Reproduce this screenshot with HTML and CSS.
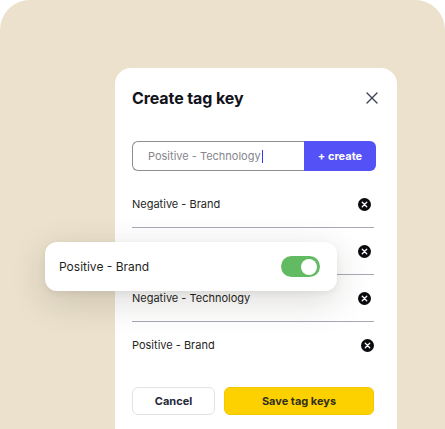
FILE: index.html
```html
<!DOCTYPE html>
<html lang="en">
<head>
    <meta charset="UTF-8">
    <meta name="viewport" content="width=device-width, initial-scale=1.0">
    <title>Create tag key</title>
    <link rel="stylesheet" href="styles.css">
</head>
<body>
    <div class="stage">
        <div class="modal">
            <div class="modal-head">
                <h1>Create tag key</h1>
                <button class="close-btn" aria-label="Close">
                    <svg width="12" height="12" viewBox="0 0 12 12"><path d="M1 1L11 11M11 1L1 11" stroke="#3d4357" stroke-width="1.4" stroke-linecap="round"/></svg>
                </button>
            </div>
            <div class="create-row">
                <div class="tag-input">Positive - Technology<span class="caret"></span></div>
                <button class="create-btn">+ create</button>
            </div>
            <ul class="tag-list">
                <li><span>Negative - Brand</span><svg class="remove" width="13" height="13" viewBox="0 0 14 14"><circle cx="7" cy="7" r="7" fill="#0b0b0f"/><path d="M4.6 4.6L9.4 9.4M9.4 4.6L4.6 9.4" stroke="#fff" stroke-width="1.4" stroke-linecap="round"/></svg></li>
                <li><span>Positive - Brand</span><svg class="remove" width="13" height="13" viewBox="0 0 14 14"><circle cx="7" cy="7" r="7" fill="#0b0b0f"/><path d="M4.6 4.6L9.4 9.4M9.4 4.6L4.6 9.4" stroke="#fff" stroke-width="1.4" stroke-linecap="round"/></svg></li>
                <li><span>Negative - Technology</span><svg class="remove" width="13" height="13" viewBox="0 0 14 14"><circle cx="7" cy="7" r="7" fill="#0b0b0f"/><path d="M4.6 4.6L9.4 9.4M9.4 4.6L4.6 9.4" stroke="#fff" stroke-width="1.4" stroke-linecap="round"/></svg></li>
                <li><span>Positive - Brand</span><svg class="remove shifted" width="13" height="13" viewBox="0 0 14 14"><circle cx="7" cy="7" r="7" fill="#0b0b0f"/><path d="M4.6 4.6L9.4 9.4M9.4 4.6L4.6 9.4" stroke="#fff" stroke-width="1.4" stroke-linecap="round"/></svg></li>
            </ul>
            <div class="modal-foot">
                <button class="btn-cancel">Cancel</button>
                <button class="btn-save">Save tag keys</button>
            </div>
        </div>
        <div class="floating-card">
            <span>Positive - Brand</span>
            <div class="toggle"><div class="knob"></div></div>
        </div>
    </div>
</body>
</html>
```

FILE: styles.css
```css
body {
    margin: 0;
    padding: 0;
    background-color: #ffffff;
    font-family: 'Inter', 'Liberation Sans', sans-serif;
    color: #1c1c22;
}
.stage {
    position: relative;
    width: 445px;
    height: 429px;
    background-color: #ebe1cc;
    border-radius: 30px 30px 0 0;
    overflow: hidden;
    box-sizing: border-box;
    padding: 68px 0 0 115px;
}
.modal {
    width: 282px;
    height: 361px;
    background-color: #ffffff;
    border-radius: 16px 16px 0 0;
    box-sizing: border-box;
    padding: 19px 23px 0 17px;
}
.modal-head {
    display: flex;
    align-items: center;
    justify-content: space-between;
    height: 22px;
}
.modal-head h1 {
    margin: 0;
    font-size: 16px;
    font-weight: 700;
    color: #12121a;
    letter-spacing: -0.1px;
}
.close-btn {
    border: none;
    background: none;
    padding: 0;
    margin-right: -4px;
    display: flex;
    cursor: pointer;
}
.create-row {
    display: flex;
    margin: 32px -2px 0 0;
    height: 30px;
}
.tag-input {
    flex: 1;
    display: flex;
    align-items: center;
    border: 1px solid #8d8d92;
    border-right: none;
    border-radius: 6px 0 0 6px;
    padding-left: 15px;
    font-size: 11px;
    color: #86868c;
}
.caret {
    display: inline-block;
    width: 1px;
    height: 13px;
    background-color: #3b35f0;
    margin-left: 1px;
}
.create-btn {
    width: 72px;
    border: none;
    border-radius: 0 6px 6px 0;
    background-color: #5451f6;
    color: #ffffff;
    font-family: inherit;
    font-size: 11px;
    font-weight: 700;
    cursor: pointer;
}
.tag-list {
    list-style: none;
    margin: 10px 0 0;
    padding: 0;
}
.tag-list li {
    display: flex;
    align-items: center;
    justify-content: space-between;
    height: 46px;
    font-size: 11px;
    color: #1f1f24;
    border-bottom: 1px solid #a9a8b4;
    padding-right: 3px;
}
.tag-list li:last-child {
    border-bottom: none;
}
.remove.shifted {
    margin-right: -3px;
}
.modal-foot {
    display: flex;
    gap: 9px;
    margin-top: 19px;
}
.modal-foot button {
    height: 28px;
    border-radius: 6px;
    font-family: inherit;
    font-size: 11px;
    font-weight: 700;
    cursor: pointer;
}
.btn-cancel {
    width: 83px;
    background-color: #ffffff;
    border: 1px solid #e3e3e6;
    color: #252838;
}
.btn-save {
    flex: 1;
    background-color: #fdd000;
    border: 1px solid #f4c800;
    color: #33301f;
}
.floating-card {
    position: absolute;
    left: 45px;
    top: 242px;
    width: 292px;
    height: 49px;
    box-sizing: border-box;
    padding: 0 17px 0 14px;
    display: flex;
    align-items: center;
    justify-content: space-between;
    background-color: #ffffff;
    border-radius: 12px;
    box-shadow: 0 10px 36px rgba(40, 30, 20, 0.16), 0 2px 6px rgba(0, 0, 0, 0.06);
    font-size: 12px;
    color: #1f1f24;
}
.toggle {
    width: 39px;
    height: 21px;
    border-radius: 11px;
    background-color: #62ba62;
    display: flex;
    align-items: center;
    justify-content: flex-end;
    padding-right: 3px;
    box-sizing: border-box;
}
.knob {
    width: 16px;
    height: 16px;
    border-radius: 50%;
    background-color: #ffffff;
}
```
